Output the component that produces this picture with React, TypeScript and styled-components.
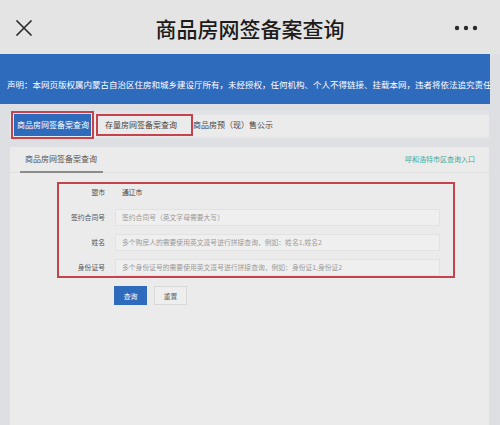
import * as React from 'react';
import styled, { createGlobalStyle } from 'styled-components';

const GlobalStyle = createGlobalStyle`
  html, body {
    margin: 0;
    padding: 0;
    background: #dedfe2;
    font-family: "Noto Sans CJK SC", "Noto Sans", sans-serif;
  }
  #root {
    height: 425px;
    overflow: hidden;
  }
`;

const RED = '#c4434d';
const BLUE = '#2f6bbd';

const Page = styled.div`
  display: flex;
  flex-direction: column;
  height: 425px;
`;

const TopBar = styled.div`
  height: 54px;
  background: #e4e4e4;
  display: grid;
  grid-template-columns: 50px 1fr 50px;
  align-items: center;
`;

const Title = styled.div`
  text-align: center;
  font-size: 21px;
  font-weight: 500;
  color: #1c1c1c;
  padding-top: 1px;
`;

const IconBox = styled.div<{ align: 'left' | 'right' }>`
  display: flex;
  justify-content: ${p => (p.align === 'left' ? 'flex-start' : 'flex-end')};
  padding: ${p => (p.align === 'left' ? '0 0 0 15px' : '0 22px 0 0')};
  padding-top: 1px;
`;

const Banner = styled.div`
  margin-right: 10px;
  height: 50px;
  background: ${BLUE};
  color: #fff;
  font-size: 8.5px;
  white-space: nowrap;
  overflow: hidden;
  display: flex;
  align-items: center;
  padding: 10px 0 0 7px;
  box-sizing: border-box;
`;

const Body = styled.div`
  flex: 1;
  display: flex;
  flex-direction: column;
  padding: 0 11px 0 10px;
`;

const TabBar = styled.div`
  margin-top: 7px;
  height: 28px;
  display: flex;
  align-items: center;
  background: linear-gradient(#e2e3e6 0 4px, #ebebeb 4px 26px, #e2e3e6 26px);
`;

const Tab = styled.div<{ active?: boolean; marked?: boolean }>`
  font-size: 8px;
  height: 22px;
  white-space: nowrap;
  box-sizing: border-box;
  color: ${p => (p.active ? '#fff' : '#444')};
  background: ${p => (p.active ? BLUE : 'transparent')};
  padding: ${p => (p.active ? '0 2px 0 3px' : p.marked ? '0 14px 0 7px' : '0')};
  margin: ${p => (p.active ? '0 5px 0 4px' : '0')};
  outline: ${p => (p.active ? `2.5px solid ${RED}` : 'none')};
  outline-offset: 1px;
  border: ${p => (p.marked ? `2px solid ${RED}` : 'none')};
  line-height: ${p => (p.marked ? '18px' : '22px')};
`;

const Card = styled.div`
  margin-top: 8px;
  flex: 1;
  background: #ebebeb;
`;

const CardHead = styled.div`
  height: 25px;
  display: flex;
  align-items: stretch;
  justify-content: space-between;
  padding: 0 14px 0 10px;
  border-bottom: 1px solid #e0e0e0;
`;

const HeadTab = styled.div`
  font-size: 8px;
  color: #555;
  padding: 6px 6px 0 5px;
  border-bottom: 2px solid #8c8c8c;
  margin-bottom: -1px;
`;

const HeadLink = styled.div`
  font-size: 7px;
  color: #3aa99b;
  padding-top: 7px;
`;

const Form = styled.div`
  margin: 9px 34px 0 47px;
  border: 2px solid ${RED};
  display: grid;
  grid-template-columns: 46px 1fr;
  column-gap: 10px;
  row-gap: 8px;
  padding-right: 13px;
`;

const Label = styled.div`
  font-size: 6.8px;
  color: #555;
  text-align: right;
  line-height: 17px;
  white-space: nowrap;
`;

const Field = styled.div<{ plain?: boolean }>`
  height: 17px;
  box-sizing: border-box;
  font-size: 6.8px;
  line-height: 15px;
  padding-left: 6px;
  white-space: nowrap;
  overflow: hidden;
  color: ${p => (p.plain ? '#444' : '#9a9a9a')};
  background: ${p => (p.plain ? 'transparent' : '#efefef')};
  border: 1px solid ${p => (p.plain ? 'transparent' : '#e2e2e2')};
`;

const Actions = styled.div`
  display: flex;
  gap: 7px;
  margin: 8px 0 0 104px;
`;

const Btn = styled.div<{ primary?: boolean }>`
  width: 33px;
  height: 19px;
  box-sizing: border-box;
  font-size: 6.8px;
  display: flex;
  align-items: center;
  justify-content: center;
  color: ${p => (p.primary ? '#fff' : '#666')};
  background: ${p => (p.primary ? BLUE : '#eeeeee')};
  border: 1px solid ${p => (p.primary ? BLUE : '#d8d8d8')};
`;

const rows: { label: string; text: string; plain?: boolean }[] = [
  { label: '盟市', text: '通辽市', plain: true },
  { label: '签约合同号', text: '签约合同号（英文字母需要大写）' },
  { label: '姓名', text: '多个购房人的需要使用英文逗号进行拼接查询，例如：姓名1,姓名2' },
  { label: '身份证号', text: '多个身份证号的需要使用英文逗号进行拼接查询，例如：身份证1,身份证2' },
];

export default function App() {
  return (
    <Page>
      <GlobalStyle />
      <TopBar>
        <IconBox align="left">
          <svg width="18" height="16" viewBox="0 0 18 16">
            <path d="M1.5 0.5 L16.5 15.5 M16.5 0.5 L1.5 15.5" stroke="#2a2a2a" strokeWidth="1.6" fill="none" />
          </svg>
        </IconBox>
        <Title>商品房网签备案查询</Title>
        <IconBox align="right">
          <svg width="24" height="6" viewBox="0 0 24 6">
            <circle cx="3" cy="3" r="2.2" fill="#2a2a2a" />
            <circle cx="12" cy="3" r="2.2" fill="#2a2a2a" />
            <circle cx="21" cy="3" r="2.2" fill="#2a2a2a" />
          </svg>
        </IconBox>
      </TopBar>
      <Banner>
        声明：本网页版权属内蒙古自治区住房和城乡建设厅所有，未经授权，任何机构、个人不得链接、挂载本网，违者将依法追究责任
      </Banner>
      <Body>
        <TabBar>
          <Tab active>商品房网签备案查询</Tab>
          <Tab marked>存量房网签备案查询</Tab>
          <Tab>商品房预（现）售公示</Tab>
        </TabBar>
        <Card>
          <CardHead>
            <HeadTab>商品房网签备案查询</HeadTab>
            <HeadLink>呼和浩特市区查询入口</HeadLink>
          </CardHead>
          <Form>
            {rows.map(r => (
              <React.Fragment key={r.label}>
                <Label>{r.label}</Label>
                <Field plain={r.plain}>{r.text}</Field>
              </React.Fragment>
            ))}
          </Form>
          <Actions>
            <Btn primary>查询</Btn>
            <Btn>重置</Btn>
          </Actions>
        </Card>
      </Body>
    </Page>
  );
}
